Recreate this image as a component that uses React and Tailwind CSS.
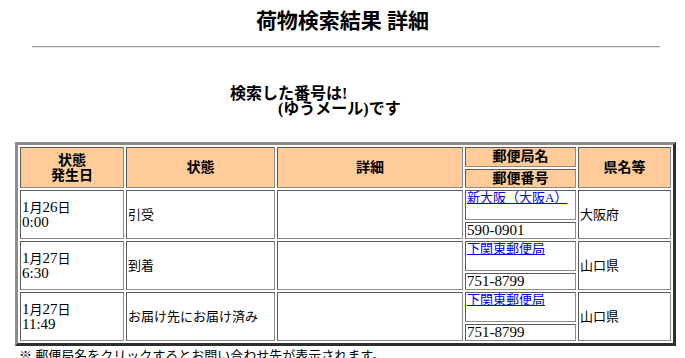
function T({ children }) {
  const parts = String(children).split(/([\x20-\x7e]+)/);
  return (
    <>
      {parts.map((p, i) =>
        /^[\x20-\x7e]+$/.test(p) ? (
          <span key={i} className="text-[15px]">
            {p}
          </span>
        ) : (
          <span key={i}>{p}</span>
        )
      )}
    </>
  );
}

export default function App() {
  const serif = { fontFamily: '"Liberation Serif", "Noto Sans CJK JP", serif' };
  const th =
    "bg-[#ffcc99] border border-t-[#5a5a5a] border-l-[#5a5a5a] border-b-[#8a8a8a] border-r-[#8a8a8a] font-bold text-[14px] leading-[15px] text-center align-middle p-0";
  const td =
    "border border-t-[#5a5a5a] border-l-[#5a5a5a] border-b-[#8a8a8a] border-r-[#8a8a8a] text-[13px] leading-[14px] text-left align-middle px-[1px] py-0";
  const box =
    "border border-t-[#5a5a5a] border-l-[#5a5a5a] border-b-[#8a8a8a] border-r-[#8a8a8a]";

  const rows = [
    { d: "1月26日", t: "0:00", s: "引受", office: "新大阪（大阪A）", zip: "590-0901", pref: "大阪府" },
    { d: "1月27日", t: "6:30", s: "到着", office: "下関東郵便局", zip: "751-8799", pref: "山口県" },
    { d: "1月27日", t: "11:49", s: "お届け先にお届け済み", office: "下関東郵便局", zip: "751-8799", pref: "山口県" },
  ];

  return (
    <div className="w-[685px] h-[358px] overflow-hidden bg-white text-black" style={serif}>
      <h1 className="text-center font-bold text-[21px] leading-[26px] pt-[8px]">荷物検索結果 詳細</h1>
      <div className="ml-[32px] w-[628px] mt-[12px] h-[2px] border-t border-b border-t-[#9a9a9a] border-b-[#e6e6e6]"></div>
      <div className="mt-[38px] font-bold text-[16px] leading-[15px]">
        <div className="pl-[230px]">検索した番号は!</div>
        <div className="pl-[278px]">(ゆうメール)です</div>
      </div>
      <table className="mt-[26px] ml-[15px] w-[661px] table-fixed border-separate border-spacing-[2px] border-[3px] border-t-[#8c8c8c] border-l-[#8c8c8c] border-r-[#2e2e2e] border-b-[#2e2e2e]">
        <colgroup>
          <col className="w-[104px]" />
          <col className="w-[149px]" />
          <col className="w-[186px]" />
          <col className="w-[111px]" />
          <col className="w-[93px]" />
        </colgroup>
        <thead>
          <tr>
            <th className={th}>
              状態
              <br />
              発生日
            </th>
            <th className={th}>状態</th>
            <th className={th}>詳細</th>
            <th className="p-0 align-top">
              <div className="flex flex-col gap-[2px]">
                <div className={`${box} bg-[#ffcc99] h-[20px] font-bold text-[14px] leading-[18px] text-center`}>郵便局名</div>
                <div className={`${box} bg-[#ffcc99] h-[19px] font-bold text-[14px] leading-[17px] text-center`}>郵便番号</div>
              </div>
            </th>
            <th className={th}>県名等</th>
          </tr>
        </thead>
        <tbody>
          {rows.map((r, i) => (
            <tr key={i}>
              <td className={td}>
                <T>{r.d}</T>
                <br />
                <T>{r.t}</T>
              </td>
              <td className={td}>{r.s}</td>
              <td className={td}></td>
              <td className="p-0 align-top">
                <div className="flex flex-col gap-[2px]">
                  <div className={`${box} h-[30px] px-[1px] text-[13px] leading-[14px]`}>
                    <a href="#" className="text-[#0000ee] underline">
                      {r.office}
                    </a>
                  </div>
                  <div className={`${box} h-[17px] px-[1px] text-[15px] leading-[15px]`}>{r.zip}</div>
                </div>
              </td>
              <td className={td}>{r.pref}</td>
            </tr>
          ))}
        </tbody>
      </table>
      <div className="pl-[19px] text-[13px] leading-[16px] pt-[2px]">※ 郵便局名をクリックするとお問い合わせ先が表示されます。</div>
    </div>
  );
}
